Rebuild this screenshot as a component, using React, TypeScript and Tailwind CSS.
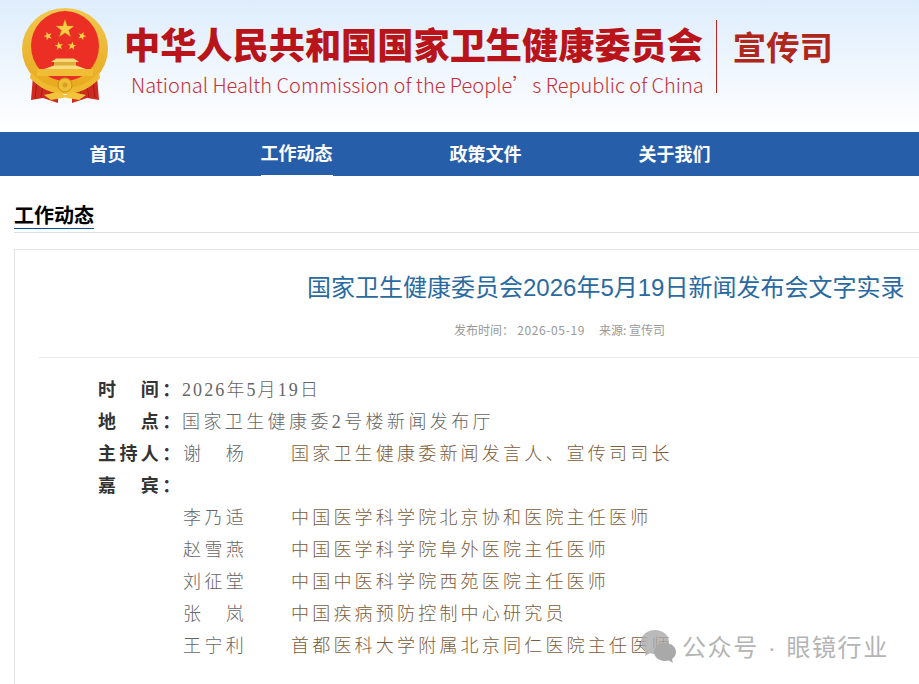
const navItems = ['首页', '工作动态', '政策文件', '关于我们'];

const guests = [
  ['李乃适', '中国医学科学院北京协和医院主任医师'],
  ['赵雪燕', '中国医学科学院阜外医院主任医师'],
  ['刘征堂', '中国中医科学院西苑医院主任医师'],
  ['张　岚', '中国疾病预防控制中心研究员'],
  ['王宁利', '首都医科大学附属北京同仁医院主任医师'],
];

function starPoints(cx: number, cy: number, r: number, rot = 0) {
  const pts: string[] = [];
  for (let i = 0; i < 10; i++) {
    const rad = i % 2 === 0 ? r : r * 0.4;
    const a = ((-90 + rot + i * 36) * Math.PI) / 180;
    pts.push(`${(cx + rad * Math.cos(a)).toFixed(2)},${(cy + rad * Math.sin(a)).toFixed(2)}`);
  }
  return pts.join(' ');
}

function Emblem() {
  return (
    <svg width="92" height="108" viewBox="0 0 92 108" className="shrink-0">
      <defs>
        <linearGradient id="gold" x1="0" y1="0" x2="0" y2="1">
          <stop offset="0" stopColor="#f0c850" />
          <stop offset="1" stopColor="#e8a91c" />
        </linearGradient>
      </defs>
      {/* ribbons */}
      <path d="M14 76 L12 100 L24 98 L39 103 L39 88 Z" fill="#cf2a20" />
      <path d="M78 76 L80 100 L68 98 L53 103 L53 88 Z" fill="#cf2a20" />
      <path d="M18 82 L16 98 M24 86 L22 97 M31 90 L30 99 M74 82 L76 98 M68 86 L70 97 M61 90 L62 99" stroke="#a81a14" strokeWidth="1" />
      {/* wreath */}
      <ellipse cx="46" cy="49" rx="43" ry="41" fill="url(#gold)" />
      <ellipse cx="46" cy="46" rx="34" ry="35" fill="#ec2f25" />
      {/* stars */}
      <polygon points={starPoints(46, 29, 9.5)} fill="#f6cf45" stroke="#c98f1c" strokeWidth="0.4" />
      <polygon points={starPoints(29, 36, 4.5, -20)} fill="#f6cf45" />
      <polygon points={starPoints(63, 36, 4.5, 20)} fill="#f6cf45" />
      <polygon points={starPoints(40, 46, 4.5, -8)} fill="#f6cf45" />
      <polygon points={starPoints(53, 46, 4.5, 8)} fill="#f6cf45" />
      {/* gate */}
      <path d="M32 62 L37 58.5 H55 L60 62 Z" fill="#f6d878" />
      <rect x="35" y="62" width="22" height="4" fill="#dfae38" />
      <path d="M25 69 L35 65.5 H57 L67 69 Z" fill="#f8dc7e" />
      <rect x="18" y="69" width="56" height="7" fill="#f1bd36" />
      {/* lower wreath and gear */}
      <path d="M12 72 Q26 88 46 88 Q66 88 80 72 L81 78 Q66 94 46 94 Q26 94 11 78 Z" fill="#eebb30" />
      <circle cx="46" cy="85" r="7" fill="#f0bf34" stroke="#c98f1c" strokeWidth="1" />
      <circle cx="46" cy="85" r="2.5" fill="#d8a024" />
      <path d="M25 95 L38 92 L46 95 L54 92 L67 95 L60 100 L46 97.5 L32 100 Z" fill="#f3c33a" />
    </svg>
  );
}

function WechatMark() {
  return (
    <svg width="38" height="34" viewBox="0 0 38 34" className="shrink-0">
      <path d="M15 0 C23 0 29 5 29 12 C29 19 23 24 15 24 C13 24 11.5 23.7 10 23.2 L5 26 L6 20.6 C2.5 18.4 1 15.4 1 12 C1 5 7 0 15 0 Z" fill="#a9a9a9" opacity="0.8" />
      <path d="M25 13 C31.5 13 36 17 36 22 C36 25 34.6 27.2 32 29 L33 33 L29 30.6 C27.8 30.9 26.4 31 25 31 C19 31 14 27 14 22 C14 17 19 13 25 13 Z" fill="#a9a9a9" />
    </svg>
  );
}

function Row({ children, className = '' }: { children: React.ReactNode; className?: string }) {
  return <div className={`flex h-8 items-center whitespace-pre ${className}`}>{children}</div>;
}

function Label({ text }: { text: string }) {
  return <span className="w-[84px] shrink-0 font-bold text-[#333]">{text}</span>;
}

export default function App() {
  return (
    <div className="relative h-[684px] w-[919px] overflow-hidden bg-white font-['Liberation_Sans','Noto_Sans_CJK_SC',sans-serif]">
      {/* header */}
      <header className="flex h-[132px] items-start bg-gradient-to-b from-[#deedfc] to-white pl-[19px]">
        <Emblem />
        <div className="ml-[13px] mt-[18px] shrink-0">
          <div className="text-[36.2px] leading-[50px] font-black whitespace-nowrap text-[#b8141a] font-['Noto_Sans_CJK_SC',sans-serif]">
            中华人民共和国国家卫生健康委员会
          </div>
          <div className="ml-[7px] mt-[3px] text-[20px] leading-[28px] font-light whitespace-pre text-[#c42f38] font-['Noto_Sans_CJK_SC',sans-serif]">
            National Health Commission of the People’s Republic of China
          </div>
        </div>
        <div className="ml-[12px] mt-5 h-[73px] w-px bg-[#b8261f]" />
        <div className="ml-[16px] mt-[24px] text-[33.4px] leading-[44px] font-bold whitespace-nowrap text-[#af261b] font-['Noto_Sans_CJK_SC',sans-serif]">
          宣传司
        </div>
      </header>

      {/* nav */}
      <nav className="flex h-11 bg-[#265ea9] pl-[13px]">
        {navItems.map((item, i) => (
          <div key={item} className="flex w-[189px] justify-center">
            <span
              className={`flex h-11 items-center pt-0.5 text-[18px] font-bold text-white ${
                i === 1 ? 'border-b border-white' : ''
              }`}
            >
              {item}
            </span>
          </div>
        ))}
      </nav>

      {/* section title */}
      <div className="mt-[26px] pl-[14px]">
        <div className="border-b border-[#dedede]">
          <span className="mb-[3px] block h-[27px] w-[80px] border-b border-[#0b4f9e] text-[20px] leading-[28px] font-bold text-black">
            工作动态
          </span>
        </div>
      </div>

      {/* article */}
      <main className="ml-[14px] mt-4 w-[930px] border-l border-t border-[#e4e4e4] pb-10 pl-6">
        <h1 className="mt-[21px] pl-[268px] text-[24px] leading-[34px] font-normal whitespace-nowrap text-[#2a6aa0]">
          国家卫生健康委员会2026年5月19日新闻发布会文字实录
        </h1>
        <div className="mt-[16px] h-[37px] border-b border-[#e8e8e8] pl-[415px] text-[12px] leading-[18px] whitespace-pre text-[#999] font-['Noto_Sans_CJK_SC',sans-serif]">
          发布时间：<span className="tracking-[0.6px]"> 2026-05-19</span><span className="ml-[14px]">来源: 宣传司</span>
        </div>
        <div className="pt-[16px] pl-[59px] text-[18px] text-[#666] font-['Liberation_Serif','Noto_Sans_CJK_SC',serif] [font-weight:300] tracking-[3.4px]">
          <Row>
            <Label text="时　间：" />
            <span className="tracking-[2.1px]">2026年5月19日</span>
          </Row>
          <Row>
            <Label text="地　点：" />
            <span>国家卫生健康委2号楼新闻发布厅</span>
          </Row>
          <Row>
            <Label text="主持人：" />
            <span className="ml-px w-[108px]">谢　杨</span>
            <span className="tracking-[3.2px] text-[#7a5c3c]">国家卫生健康委新闻发言人、宣传司司长</span>
          </Row>
          <Row>
            <Label text="嘉　宾：" />
          </Row>
          {guests.map(([name, title]) => (
            <Row key={name}>
              <span className="ml-[85px] w-[108px]">{name}</span>
              <span className="tracking-[3.2px] text-[#7a5c3c]">{title}</span>
            </Row>
          ))}
        </div>
      </main>

      {/* watermark over the page */}
      <div className="absolute left-[640px] top-[630px] flex items-center text-[#b4b4b4]">
        <WechatMark />
        <span className="ml-[4px] text-[24px] leading-[32px] tracking-[1.6px] whitespace-pre font-['Noto_Sans_CJK_SC',sans-serif]">
          公众号<span className="mx-[9px] font-['Liberation_Sans']">·</span>眼镜行业
        </span>
      </div>
    </div>
  );
}
